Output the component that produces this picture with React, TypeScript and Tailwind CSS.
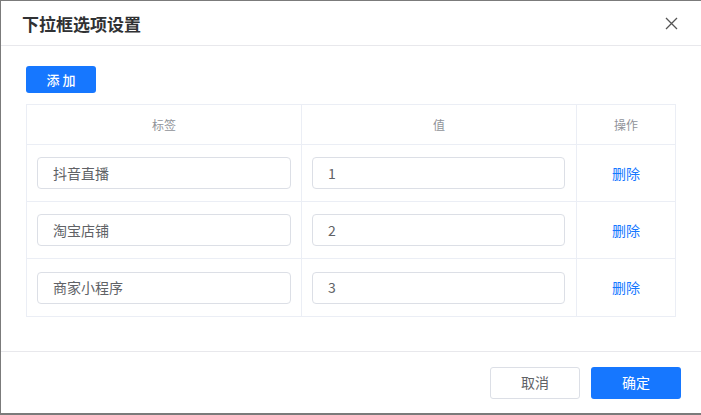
import React from "react";

const rows = [
  { label: "抖音直播", value: "1" },
  { label: "淘宝店铺", value: "2" },
  { label: "商家小程序", value: "3" },
];

const font = { fontFamily: '"Noto Sans CJK SC", "Noto Sans", sans-serif' };

const App = () => {
  return (
    <div className="w-[701px] h-[415px] bg-[#7b7b7b] pt-px pl-px pb-[2px] overflow-hidden" style={font}>
      <div className="w-[700px] h-[412px] bg-white flex flex-col">
        <div className="h-[45px] flex items-center justify-between pl-[21px] pr-[23px] border-b border-[#e8e8ec] shrink-0">
          <h2 className="text-[17px] font-bold text-[#303133] leading-none">下拉框选项设置</h2>
          <svg width="13" height="13" viewBox="0 0 13 13" className="text-[#555]">
            <path d="M1 1 L12 12 M12 1 L1 12" stroke="currentColor" strokeWidth="1.3" fill="none" />
          </svg>
        </div>

        <div className="flex-1 pt-5 px-[25px]">
          <button className="w-[70px] h-[27px] rounded-[3px] bg-[#1677ff] text-white text-[13px] font-medium leading-none">
            添 加
          </button>

          <div className="mt-[11px] w-[650px] border border-[#ebeef5]">
            <div className="grid grid-cols-[275px_275px_1fr] h-[40px] border-b border-[#ebeef5] text-[12px] text-[#909399]">
              <div className="flex items-center justify-center border-r border-[#ebeef5]">标签</div>
              <div className="flex items-center justify-center border-r border-[#ebeef5]">值</div>
              <div className="flex items-center justify-center">操作</div>
            </div>
            {rows.map((r, i) => (
              <div
                key={r.value}
                className={`grid grid-cols-[275px_275px_1fr] h-[57px] ${i < rows.length - 1 ? "border-b border-[#ebeef5]" : ""}`}
              >
                <div className="flex items-center pl-[10px] pr-[10px] border-r border-[#ebeef5]">
                  <div className="w-full h-[32px] border border-[#dcdfe6] rounded-[4px] flex items-center pl-[15px] text-[14px] text-[#606266]">
                    {r.label}
                  </div>
                </div>
                <div className="flex items-center pl-[10px] pr-[11px] border-r border-[#ebeef5]">
                  <div className="w-full h-[32px] border border-[#dcdfe6] rounded-[4px] flex items-center pl-[15px] text-[14px] text-[#606266]">
                    {r.value}
                  </div>
                </div>
                <div className="flex items-center justify-center text-[14px] text-[#1677ff]">删除</div>
              </div>
            ))}
          </div>
        </div>

        <div className="h-[62px] shrink-0 border-t border-[#e8e8ec] flex items-center justify-end gap-[11px] pr-[20px]">
          <button className="w-[90px] h-[32px] rounded-[3px] border border-[#dcdfe6] bg-white text-[14px] text-[#606266]">
            取消
          </button>
          <button className="w-[90px] h-[32px] rounded-[3px] bg-[#1677ff] text-white text-[14px]">
            确定
          </button>
        </div>
      </div>
    </div>
  );
};

export default App;
